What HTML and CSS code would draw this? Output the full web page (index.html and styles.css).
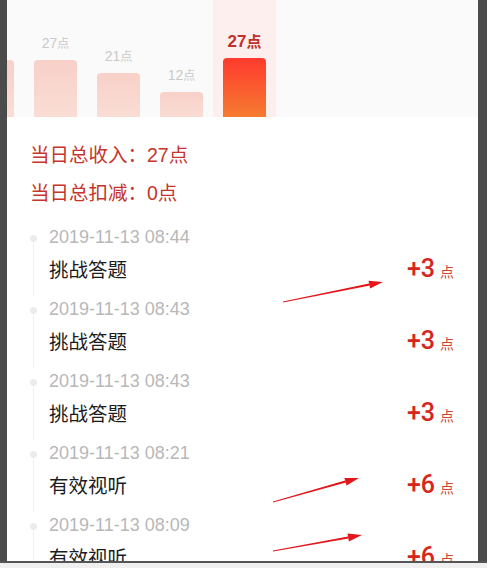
FILE: index.html
```html
<!DOCTYPE html>
<html lang="zh-CN">
<head>
  <meta charset="UTF-8">
  <title>收入明细</title>
  <link rel="stylesheet" href="styles.css">
</head>
<body>
  <div class="screen">
    <div class="sheet">
      <div class="chart">
        <div class="col"><div class="bar" style="height:57px"></div></div>
        <div class="col"><span class="val">27<small>点</small></span><div class="bar" style="height:57px"></div></div>
        <div class="col"><span class="val">21<small>点</small></span><div class="bar" style="height:44px"></div></div>
        <div class="col"><span class="val">12<small>点</small></span><div class="bar" style="height:25px"></div></div>
        <div class="col active"><span class="val">27<small>点</small></span><div class="bar" style="height:59px"></div></div>
      </div>

      <div class="detail">
        <div class="summary">
          <p>当日总收入：27点</p>
          <p>当日总扣减：0点</p>
        </div>

        <ul class="timeline">
          <li class="item">
            <div class="rail"><i class="dot"></i><i class="line"></i></div>
            <div class="body">
              <div class="time">2019-11-13 08:44</div>
              <div class="row"><span class="title">挑战答题</span><span class="amount">+3<small>点</small></span></div>
            </div>
          </li>
          <li class="item">
            <div class="rail"><i class="dot"></i><i class="line"></i></div>
            <div class="body">
              <div class="time">2019-11-13 08:43</div>
              <div class="row"><span class="title">挑战答题</span><span class="amount">+3<small>点</small></span></div>
            </div>
          </li>
          <li class="item">
            <div class="rail"><i class="dot"></i><i class="line"></i></div>
            <div class="body">
              <div class="time">2019-11-13 08:43</div>
              <div class="row"><span class="title">挑战答题</span><span class="amount">+3<small>点</small></span></div>
            </div>
          </li>
          <li class="item">
            <div class="rail"><i class="dot"></i><i class="line"></i></div>
            <div class="body">
              <div class="time">2019-11-13 08:21</div>
              <div class="row"><span class="title">有效视听</span><span class="amount">+6<small>点</small></span></div>
            </div>
          </li>
          <li class="item">
            <div class="rail"><i class="dot"></i><i class="line"></i></div>
            <div class="body">
              <div class="time">2019-11-13 08:09</div>
              <div class="row"><span class="title">有效视听</span><span class="amount">+6<small>点</small></span></div>
            </div>
          </li>
        </ul>
      </div>
    </div>
    <div class="footer"></div>

    <!-- red annotation arrows drawn over the screenshot -->
    <svg class="marks" width="487" height="568" viewBox="0 0 487 568">
      <g fill="#e3161b">
        <polygon points="283,302.6 370,285.6 369,283.4 283,301.4"/>
        <polygon points="383,282 370.1,288.6 368.5,280.8"/>
        <polygon points="273,502.6 346,482.6 345,480.6 273,501.4"/>
        <polygon points="359,478 346.6,485.6 344.4,477.9"/>
        <polygon points="273,551.6 348.5,538.6 348,536.4 273,550.4"/>
        <polygon points="362,535 348.9,541.4 347.5,533.5"/>
      </g>
    </svg>
  </div>
</body>
</html>
```

FILE: styles.css
```css
* {
  box-sizing: border-box;
}
body {
  margin: 0;
  background: #4b4b4b;
  font-family: "Liberation Sans", "Noto Sans CJK SC", sans-serif;
}
.screen {
  position: relative;
  width: 487px;
  height: 568px;
  display: flex;
  flex-direction: column;
  overflow: hidden;
}
.sheet {
  width: 471px;
  height: 561px;
  flex: none;
  margin-left: 7px;
  background: #fff;
  overflow: hidden;
  display: flex;
  flex-direction: column;
}
.chart {
  height: 117px;
  flex: none;
  display: flex;
  margin-left: -46px;
  background: #fafafa;
}
.col {
  width: 63px;
  flex: none;
  display: flex;
  flex-direction: column;
  align-items: center;
  justify-content: flex-end;
}
.col .val {
  font-size: 14px;
  line-height: 18px;
  color: #c9c9c9;
  margin-bottom: 7px;
}
.col .val small {
  font-size: 12px;
}
.col .bar {
  width: 43px;
  border-radius: 4px 4px 0 0;
  background: linear-gradient(#f8d0c8, #f9ddd4);
}
.col.active {
  background: #fcefee;
}
.col.active .val {
  font-size: 17px;
  font-weight: bold;
  color: #c1302a;
}
.col.active .val small {
  font-size: 15px;
}
.col.active .bar {
  background: linear-gradient(#ff3a2e, #f57b30);
}
.detail {
  flex: 1;
  padding: 19px 24px 0 23px;
  overflow: hidden;
}
.summary p {
  margin: 0;
  height: 38px;
  font-size: 19.5px;
  line-height: 38px;
  color: #c5352b;
}
.timeline {
  list-style: none;
  margin: 12px 0 0;
  padding: 0;
}
.item {
  display: flex;
}
.rail {
  width: 19px;
  flex: none;
  display: flex;
  flex-direction: column;
}
.rail .dot {
  width: 7px;
  height: 7px;
  margin-top: 11px;
  border-radius: 50%;
  background: #ececec;
}
.rail .line {
  flex: 1;
  width: 1px;
  margin-left: 3px;
  background: #f1f1f1;
}
.body {
  flex: 1;
  padding-bottom: 10px;
}
.time {
  height: 26px;
  font-size: 18px;
  line-height: 26px;
  color: #b8b8b8;
}
.row {
  height: 36px;
  display: flex;
  justify-content: space-between;
  align-items: center;
}
.title {
  font-size: 19.5px;
  color: #1c1c1c;
}
.amount {
  font-family: Roboto, "Liberation Sans", sans-serif;
  font-size: 25px;
  font-weight: 500;
  color: #d6271d;
}
.amount small {
  font-family: "Noto Sans CJK SC", sans-serif;
  font-size: 14px;
  font-weight: normal;
  margin-left: 5px;
  color: #d2422f;
}
.footer {
  flex: 1;
  background: #efefef;
  border-top: 2px solid #555;
}
.marks {
  position: absolute;
  top: 0;
  left: 0;
  pointer-events: none;
}
```
